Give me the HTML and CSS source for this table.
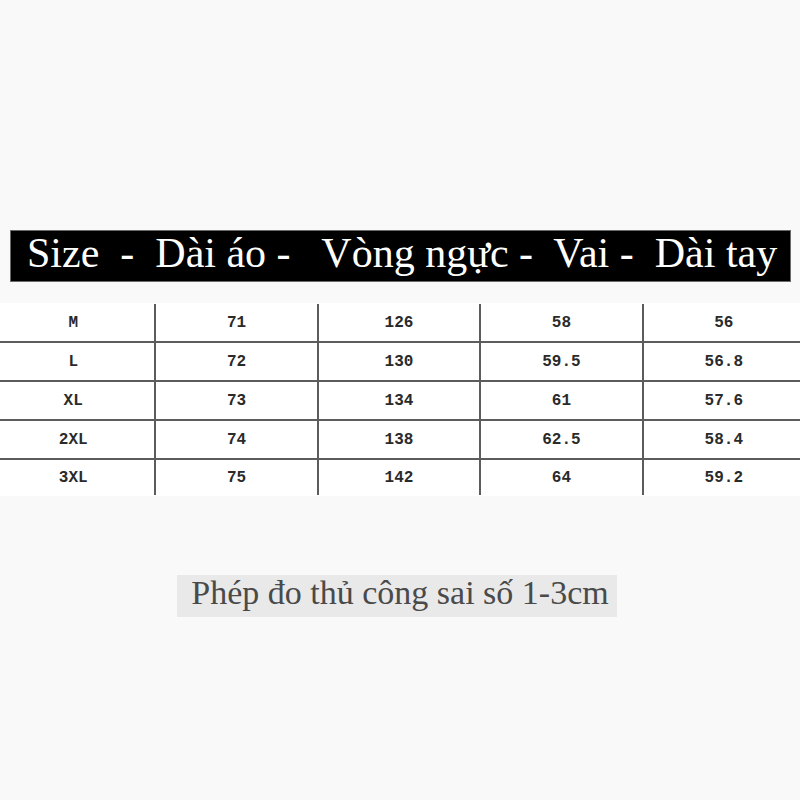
FILE: index.html
```html
<!DOCTYPE html>
<html lang="vi">
<head>
<meta charset="utf-8">
<title>Size chart</title>
<link rel="stylesheet" href="styles.css">
</head>
<body>
<div class="page">
  <div class="title-bar"><span class="title-text">Size  -  Dài áo -   Vòng ngực -  Vai -  Dài tay</span></div>
  <div class="table-wrap">
    <div class="table">
      <div class="row first">
        <div class="cell">M</div><div class="cell">71</div><div class="cell">126</div><div class="cell">58</div><div class="cell">56</div>
      </div>
      <div class="row">
        <div class="cell">L</div><div class="cell">72</div><div class="cell">130</div><div class="cell">59.5</div><div class="cell">56.8</div>
      </div>
      <div class="row">
        <div class="cell">XL</div><div class="cell">73</div><div class="cell">134</div><div class="cell">61</div><div class="cell">57.6</div>
      </div>
      <div class="row">
        <div class="cell">2XL</div><div class="cell">74</div><div class="cell">138</div><div class="cell">62.5</div><div class="cell">58.4</div>
      </div>
      <div class="row last">
        <div class="cell">3XL</div><div class="cell">75</div><div class="cell">142</div><div class="cell">64</div><div class="cell">59.2</div>
      </div>
    </div>
  </div>
  <div class="note-wrap">
    <span class="note">Phép đo thủ công sai số 1-3cm</span>
  </div>
</div>
</body>
</html>
```

FILE: styles.css
```css
html, body {
  margin: 0;
  padding: 0;
  background: #f9f9f9;
  overflow: hidden;
}

.page {
  width: 800px;
  height: 800px;
  padding-top: 230px;
  box-sizing: border-box;
}

.title-bar {
  margin: 0 9px 0 10px;
  height: 52px;
  box-sizing: border-box;
  background: #000;
  border: 1px solid #6a6a6a;
  padding: 0 0 5px 16px;
}

.title-text {
  display: block;
  white-space: pre;
  font-family: "Liberation Serif", "Times New Roman", serif;
  font-size: 42px;
  line-height: 45px;
  color: #fff;
}

.table-wrap {
  margin-top: 21px;
  background: #fff;
  overflow: hidden;
}

.table {
  width: 812px;
  margin-left: -8px;
}

.row {
  display: grid;
  grid-template-columns: repeat(5, 1fr);
  height: 39px;
  border-top: 2px solid #5c5c5c;
  box-sizing: border-box;
}

.row.first {
  height: 38px;
  border-top: none;
  padding-top: 1px;
}

.row.last {
  height: 38px;
  padding-bottom: 1px;
}

.cell {
  display: flex;
  align-items: center;
  justify-content: center;
  font-family: "Liberation Mono", "Courier New", monospace;
  font-size: 16px;
  font-weight: bold;
  color: #2a2a2a;
}

.cell + .cell {
  border-left: 2px solid #5c5c5c;
}

.note-wrap {
  margin-top: 79px;
  display: flex;
  justify-content: center;
}

.note {
  display: inline-block;
  margin-left: -6px;
  background: #e9e9e9;
  padding: 0 8px 7px 14px;
  font-family: "Liberation Serif", "Times New Roman", serif;
  font-size: 34px;
  line-height: 35px;
  color: #4a4a4a;
}
```
